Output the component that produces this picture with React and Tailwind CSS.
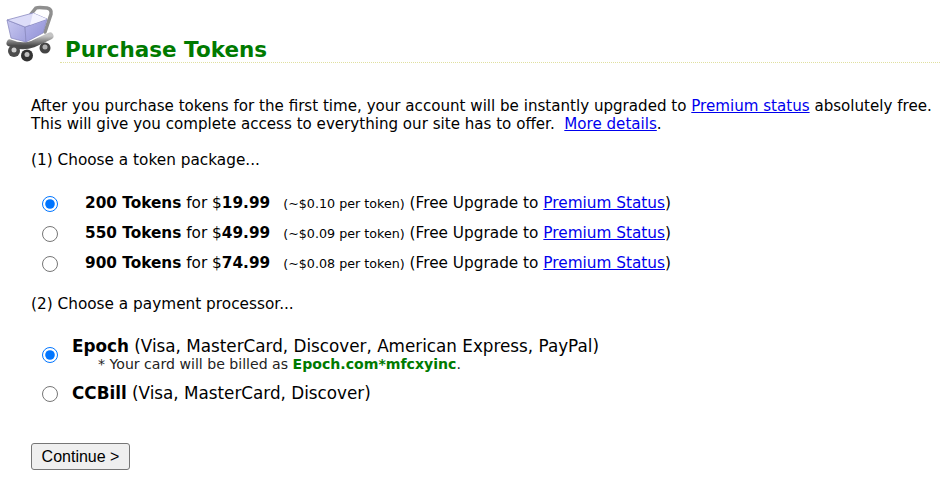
import React from "react";

const CartIcon = () => (
  <svg width="58" height="62" viewBox="0 0 58 62" className="shrink-0 blur-[0.4px]">
    <defs>
      <linearGradient id="basketLeft" x1="0" y1="0" x2="1" y2="1">
        <stop offset="0" stopColor="#c8c8f0" />
        <stop offset="1" stopColor="#a2a2de" />
      </linearGradient>
      <linearGradient id="basketRight" x1="0" y1="0" x2="1" y2="1">
        <stop offset="0" stopColor="#b4b4ea" />
        <stop offset="1" stopColor="#9090d4" />
      </linearGradient>
      <linearGradient id="metal" x1="0" y1="0" x2="0" y2="1">
        <stop offset="0" stopColor="#c4c4c4" />
        <stop offset="1" stopColor="#4a4a4a" />
      </linearGradient>
    </defs>
    <g transform="translate(-2 0)">
      {/* handle */}
      <path d="M31 13 L36 7 Q38 6 47 7 Q52 8 51 13 L45 31" fill="none" stroke="#8f8f8f" strokeWidth="3.5" strokeLinecap="round" />
      {/* frame */}
      <path d="M10 42 Q22 47 33 43 L50 35" fill="none" stroke="url(#metal)" strokeWidth="7" strokeLinecap="round" />
      {/* wheels */}
      <ellipse cx="14" cy="50" rx="6" ry="6" fill="#4c4c4c" />
      <ellipse cx="14" cy="49" rx="2.5" ry="2.5" fill="#cfcfcf" />
      <ellipse cx="27" cy="54.5" rx="6" ry="6" fill="#333" />
      <ellipse cx="27" cy="53.5" rx="2.5" ry="2.5" fill="#c0c0c0" />
      <ellipse cx="45" cy="47" rx="5.5" ry="5.5" fill="#444" />
      <ellipse cx="45" cy="46" rx="2.5" ry="2.5" fill="#b0b0b0" />
      {/* basket */}
      <path d="M7 19 L25 26 L26 41 L11 37 Z" fill="url(#basketLeft)" stroke="#8a8ac0" strokeWidth="0.8" />
      <path d="M25 26 L47 18 L43 32 L26 41 Z" fill="url(#basketRight)" stroke="#8a8ac0" strokeWidth="0.8" />
      <path d="M7 19 L33 12 L47 18 L25 26 Z" fill="#dcdcf8" stroke="#8a8ac0" strokeWidth="0.8" />
      <path d="M33 12 L47 18 L30 24 Z" fill="#f4f4ff" />
    </g>
  </svg>
);

const TextLink = ({ children }) => (
  <a href="#" className="text-[#0000ee] underline">{children}</a>
);

const packages = [
  { tokens: "200", price: "19.99", per: "0.10", checked: true },
  { tokens: "550", price: "49.99", per: "0.09" },
  { tokens: "900", price: "74.99", per: "0.08" },
];

export default function App() {
  return (
    <div className="w-[940px] h-[486px] overflow-hidden bg-white text-black text-[15.1px] leading-[19px] font-['Verdana','DejaVu_Sans',sans-serif]">
      <div className="flex items-end h-[63px] pl-[2px]">
        <CartIcon />
        <h1 className="flex-1 pl-[5px] border-b border-dotted border-[#e0e0a0] text-[21.5px] leading-[24px] font-bold text-[#007a00]">
          Purchase Tokens
        </h1>
      </div>

      <div className="pl-[31px] pt-[34px]">
        <p className="whitespace-nowrap">
          After you purchase tokens for the first time, your account will be instantly upgraded to <TextLink>Premium status</TextLink> absolutely free.
        </p>
        <p className="whitespace-nowrap -mt-[1px]">
          This will give you complete access to everything our site has to offer.&nbsp; <TextLink>More details</TextLink>.
        </p>

        <p className="mt-[17px] text-[15.3px]">(1) Choose a token package...</p>

        <div className="mt-[24px] flex flex-col gap-[11px] pl-[11px] text-[15.3px]">
          {packages.map((p) => (
            <label key={p.tokens} className="flex items-start whitespace-nowrap">
              <input type="radio" name="package" defaultChecked={p.checked} className="w-4 h-4 m-0 mt-[2px] shrink-0" />
              <span className="ml-[27px]">
                <b>{p.tokens} Tokens</b> for $<b>{p.price}</b>
                <span className="ml-[13px] text-[12.7px]">(~${p.per} per token)</span>{" "}
                (Free Upgrade to <TextLink>Premium Status</TextLink>)
              </span>
            </label>
          ))}
        </div>

        <p className="mt-[22px] text-[15.3px]">(2) Choose a payment processor...</p>

        <div className="mt-[23px] pl-[11px] text-[16.8px]">
          <label className="flex items-center whitespace-nowrap">
            <input type="radio" name="processor" defaultChecked className="w-4 h-4 m-0 shrink-0" />
            <span className="ml-[14px]">
              <span className="block"><b>Epoch</b> (Visa, MasterCard, Discover, American Express, PayPal)</span>
              <span className="block pl-[26px] text-[14.1px] leading-[17px] text-[#222]">
                * Your card will be billed as <b className="text-[#007a00]">Epoch.com*mfcxyinc</b>.
              </span>
            </span>
          </label>
          <label className="flex items-center whitespace-nowrap mt-[11px]">
            <input type="radio" name="processor" className="w-4 h-4 m-0 shrink-0" />
            <span className="ml-[14px]"><b>CCBill</b> (Visa, MasterCard, Discover)</span>
          </label>
        </div>

        <button className="mt-[40px] h-[27px] w-[99px] block rounded-[3px] border border-[#767676] bg-[#efefef] text-[16px] text-black font-['Liberation_Sans',Arial,sans-serif]">
          Continue &gt;
        </button>
      </div>
    </div>
  );
}
